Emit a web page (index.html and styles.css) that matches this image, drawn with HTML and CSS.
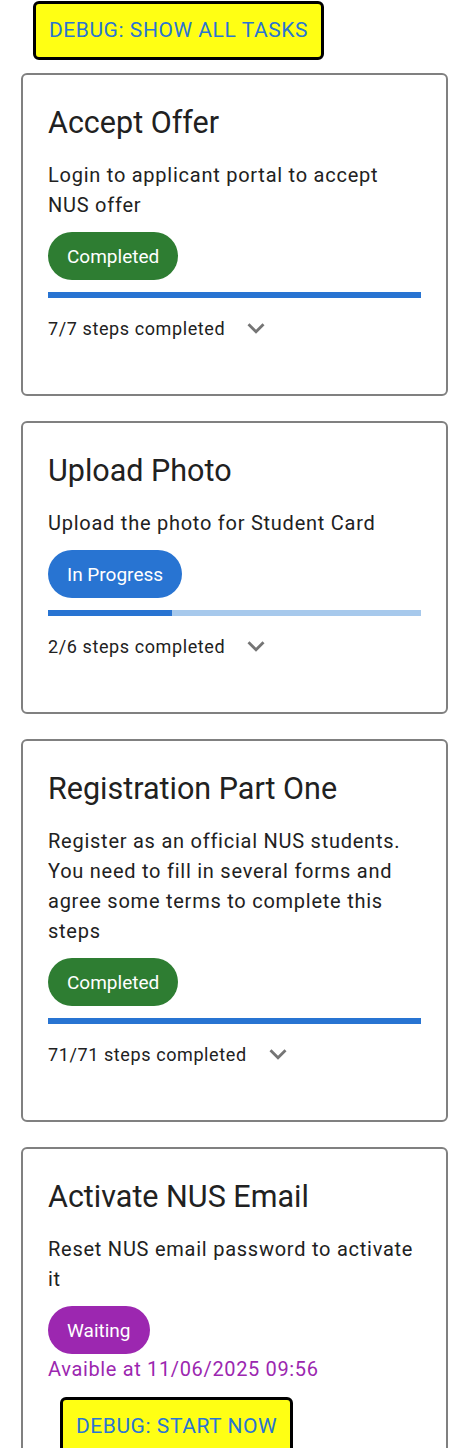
FILE: index.html
```html
<!DOCTYPE html>
<html lang="en">
<head>
<meta charset="utf-8">
<title>Tasks</title>
<link rel="stylesheet" href="styles.css">
</head>
<body>
<div class="page">
  <button class="debug-btn top-btn">DEBUG: SHOW ALL TASKS</button>

  <div class="card">
    <h2 class="title">Accept Offer</h2>
    <p class="desc">Login to applicant portal to accept NUS offer</p>
    <span class="chip chip-done">Completed</span>
    <div class="bar"><div class="bar-fill" style="width:100%"></div></div>
    <div class="steps">
      <span class="steps-text">7/7 steps completed</span>
      <svg class="chev" viewBox="0 0 24 24"><path d="M16.59 8.59 12 13.17 7.41 8.59 6 10l6 6 6-6z"/></svg>
    </div>
  </div>

  <div class="card">
    <h2 class="title">Upload Photo</h2>
    <p class="desc">Upload the photo for Student Card</p>
    <span class="chip chip-progress">In Progress</span>
    <div class="bar"><div class="bar-fill" style="width:33.33%"></div></div>
    <div class="steps">
      <span class="steps-text">2/6 steps completed</span>
      <svg class="chev" viewBox="0 0 24 24"><path d="M16.59 8.59 12 13.17 7.41 8.59 6 10l6 6 6-6z"/></svg>
    </div>
  </div>

  <div class="card">
    <h2 class="title">Registration Part One</h2>
    <p class="desc">Register as an official NUS students. You need to fill in several forms and agree some terms to complete this steps</p>
    <span class="chip chip-done">Completed</span>
    <div class="bar"><div class="bar-fill" style="width:100%"></div></div>
    <div class="steps">
      <span class="steps-text">71/71 steps completed</span>
      <svg class="chev" viewBox="0 0 24 24"><path d="M16.59 8.59 12 13.17 7.41 8.59 6 10l6 6 6-6z"/></svg>
    </div>
  </div>

  <div class="card">
    <h2 class="title">Activate NUS Email</h2>
    <p class="desc">Reset NUS email password to activate it</p>
    <span class="chip chip-wait">Waiting</span>
    <p class="avail">Avaible at 11/06/2025 09:56</p>
    <button class="debug-btn start-btn">DEBUG: START NOW</button>
  </div>
</div>
</body>
</html>
```

FILE: styles.css
```css
* { box-sizing: border-box; }

html, body {
  margin: 0;
  padding: 0;
  background: #ffffff;
}

body {
  font-family: Roboto, "Liberation Sans", Arial, sans-serif;
  color: #212121;
}

.page {
  padding: 1px 16px 0 21px;
}

.debug-btn {
  display: block;
  font-family: Roboto, "Liberation Sans", Arial, sans-serif;
  font-size: 21px;
  line-height: 25px;
  letter-spacing: 0.55px;
  color: #2a75d3;
  background: #ffff14;
  border: 3px solid #000000;
  border-radius: 6px;
  padding: 14px 13px;
  margin: 0 0 0 12px;
  cursor: pointer;
}

.top-btn {
  margin-bottom: 13px;
}

.card {
  border: 2px solid #808080;
  border-radius: 6px;
  padding: 30px 25px 49px;
  margin-bottom: 25px;
  display: flex;
  flex-direction: column;
  align-items: flex-start;
}

.title {
  margin: 0;
  font-size: 30.5px;
  line-height: 36px;
  font-weight: 400;
  color: #212121;
}

.desc {
  margin: 19px 0 0;
  font-size: 20px;
  line-height: 30px;
  letter-spacing: 0.75px;
  color: #212121;
}

.chip {
  margin-top: 12px;
  height: 48px;
  border-radius: 24px;
  padding: 0 19px;
  display: inline-flex;
  align-items: center;
  font-size: 19px;
  color: #ffffff;
}

.chip-done { background: #2e7d32; }
.chip-progress { background: #2874d2; }
.chip-wait { background: #9c27b0; }

.bar {
  align-self: stretch;
  margin-top: 12px;
  height: 6px;
  background: #a7c9ec;
  display: flex;
}

.bar-fill {
  height: 100%;
  background: #2874d2;
}

.steps {
  margin-top: 13px;
  height: 34px;
  display: flex;
  align-items: center;
  gap: 14px;
}

.steps-text {
  font-size: 18px;
  letter-spacing: 0.6px;
  color: #212121;
}

.chev {
  width: 34px;
  height: 34px;
  fill: #757575;
}

.avail {
  margin: 0;
  font-size: 20px;
  line-height: 30px;
  letter-spacing: 0.65px;
  color: #9c27b0;
}

.start-btn {
  margin-top: 13px;
}
```
